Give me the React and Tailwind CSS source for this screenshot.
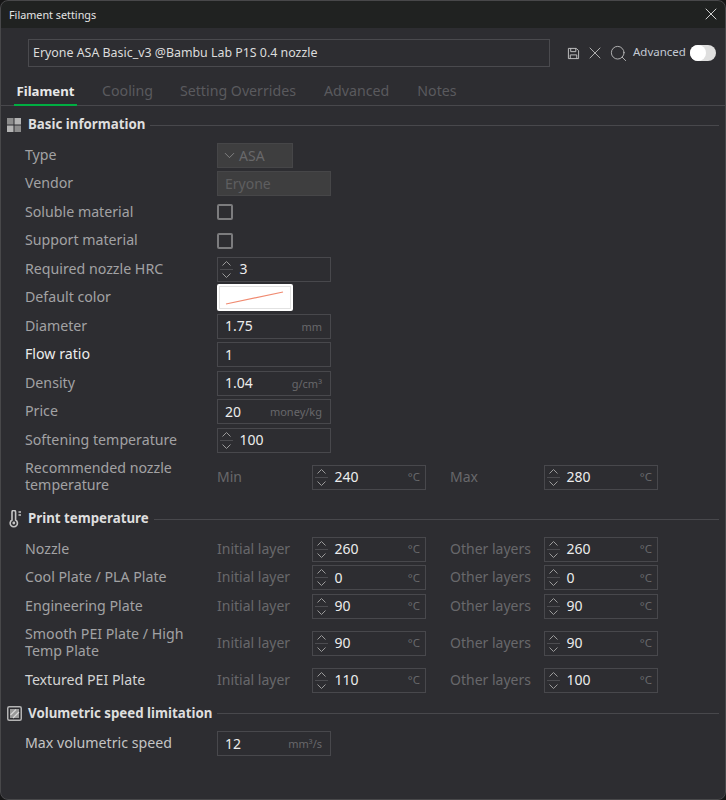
import { ChevronDown, X, Search } from 'lucide-react';

const font = { fontFamily: '"Noto Sans", sans-serif' };

function Spin() {
  return (
    <div className="w-[16px] h-full mr-[5.5px] flex flex-col items-center justify-center shrink-0">
      <svg width="11" height="7" viewBox="0 0 11 7" fill="none" stroke="#9a9a9a" strokeWidth="1">
        <path d="M1.5 5.5 L5.5 1.5 L9.5 5.5" />
      </svg>
      <div className="w-[13px] h-px bg-[#4c4c50] my-[2px]" />
      <svg width="11" height="7" viewBox="0 0 11 7" fill="none" stroke="#9a9a9a" strokeWidth="1">
        <path d="M1.5 1.5 L5.5 5.5 L9.5 1.5" />
      </svg>
    </div>
  );
}

function NumField({ value, unit, spin, temp }) {
  return (
    <div className="w-[114px] h-[25px] border border-[#48484c] flex items-center shrink-0">
      {spin ? <Spin /> : <div className="w-[7px] shrink-0" />}
      <span className="text-[14px] text-[#ececec] flex-1 leading-none">{value}</span>
      {temp && <span className="text-[11.5px] text-[#68686b] pr-[5px] leading-none">°C</span>}
      {unit && <span className="text-[11px] text-[#68686b] pr-[8px] leading-none">{unit}</span>}
    </div>
  );
}

function Row({ label, bright, tall, children }) {
  return (
    <div className={`flex items-center pl-[25px] mb-[3.5px] ${tall ? 'min-h-[42px]' : ''}`}>
      <div className={`w-[192px] shrink-0 text-[14.2px] leading-[17px] pr-2 -mt-[2px] ${bright || 'text-[#a2a2a4]'}`}>{label}</div>
      {children}
    </div>
  );
}

function TempRow({ label, a, b, tall, bright, la = 'Initial layer', lb = 'Other layers' }) {
  return (
    <Row label={label} tall={tall} bright={bright}>
      <div className="w-[95px] shrink-0 text-[14px] text-[#68686b] -mt-[2px]">{la}</div>
      <NumField value={a} temp spin />
      <div className="w-[118px] shrink-0 pl-[24px] text-[14px] text-[#68686b] whitespace-nowrap -mt-[2px]">{lb}</div>
      <NumField value={b} temp spin />
    </Row>
  );
}

function Section({ icon, title, children }) {
  return (
    <>
      <div className="flex items-center h-[35px] pl-[7px] pr-[7px]">
        <div className="w-[21px] shrink-0 -mt-px">{icon}</div>
        <span className="text-[13.3px] font-bold text-[#dedede] whitespace-nowrap">{title}</span>
        <div className="flex-1 h-px bg-[#48484c] ml-[5px]" />
      </div>
      {children}
    </>
  );
}

const GridIcon = (
  <svg width="14" height="14" viewBox="0 0 14 14" fill="#b4b4b4">
    <rect x="0" y="0" width="6.5" height="6.5" fill="#8c8c8c" />
    <rect x="7.5" y="0" width="6.5" height="6.5" />
    <rect x="0" y="7.5" width="6.5" height="6.5" />
    <rect x="7.5" y="7.5" width="6.5" height="6.5" fill="#8c8c8c" />
  </svg>
);

const ThermoIcon = (
  <svg width="14" height="18" viewBox="0 0 14 18" fill="none" stroke="#c4c4c4" strokeWidth="1.6" className="ml-[2px]">
    <path d="M3 2.2a1.8 1.8 0 0 1 3.6 0V10a3.6 3.6 0 1 1-3.6 0Z" />
    <circle cx="4.8" cy="13" r="1.4" fill="#c4c4c4" stroke="none" />
    <path d="M9.5 2h2.5M9.5 5h2.5" />
  </svg>
);

const VolIcon = (
  <svg width="15" height="15" viewBox="0 0 15 15" fill="none">
    <rect x="0.75" y="0.75" width="13.5" height="13.5" rx="1.5" stroke="#b4b4b4" strokeWidth="1.5" />
    <rect x="3" y="3" width="9" height="9" fill="#9a9a9a" />
    <path d="M3.5 9 L9 3.5 M6 12 L12 6" stroke="#d6d6d6" strokeWidth="1.2" />
  </svg>
);

export default function App() {
  return (
    <div style={font} className="w-[726px] h-[800px] bg-[#161616]">
      <div className="relative w-full h-full rounded-lg bg-[#2d2d31] overflow-hidden">
        <div className="h-[28px] bg-[#202221] flex items-center justify-between pl-[9px] pr-[5px]">
          <span className="text-[10.8px] text-[#e4e4e4] mt-[2px]">Filament settings</span>
          <X size={20} strokeWidth={1.1} color="#e0e0e0" />
        </div>

        <div className="flex items-center pl-[28px] pt-[11px] h-[39px]">
          <div className="w-[522px] h-[28px] border border-[#4a4a4e] flex items-center pl-[4px] text-[12.4px] text-[#dcdcdc] shrink-0">
            Eryone ASA Basic_v3 @Bambu Lab P1S 0.4 nozzle
          </div>
          <svg width="13" height="13" viewBox="0 0 14 14" fill="none" stroke="#c8c8c8" strokeWidth="1" className="ml-[17px]">
            <path d="M1.5 1.5H10L12.5 4V12.5H1.5Z" />
            <path d="M4 1.5V5H9.5V1.5M3.5 12.5V8.5H10.5V12.5" />
          </svg>
          <X size={20} strokeWidth={1} color="#c8c8c8" className="ml-[5px]" />
          <Search size={19} strokeWidth={1.05} color="#c8c8c8" className="ml-[4px]" />
          <span className="text-[11.5px] text-[#c4cad4] ml-[5px] -mt-[2px]">Advanced</span>
          <div className="w-[26px] h-[16px] rounded-full bg-[#dedede] ml-[4px] relative">
            <div className="absolute left-0 top-0 w-[16px] h-[16px] rounded-full bg-white" />
          </div>
        </div>

        <div className="flex h-[38.5px] border-b border-[#48484c] pl-[14px] pt-[12px] text-[14.2px] leading-[24px]">
          <div className="w-[63px] h-[26.5px] border-b-2 border-[#00ae42] text-center font-bold text-[13.2px] text-[#e8e8e8]">Filament</div>
          <div className="ml-[25px] text-[#5a5a5e]">Cooling</div>
          <div className="ml-[27px] text-[#5a5a5e]">Setting Overrides</div>
          <div className="ml-[28px] text-[#5a5a5e]">Advanced</div>
          <div className="ml-[28px] text-[#5a5a5e]">Notes</div>
        </div>

        <div className="pt-[2px]">
          <Section icon={GridIcon} title="Basic information">
            <Row label="Type">
              <div className="w-[76px] h-[25px] bg-[#3e3e3f] border border-[#464648] flex items-center pl-[3px] text-[14px] text-[#68686a]">
                <ChevronDown size={17} strokeWidth={1} color="#9a9a9a" className="mr-[1px]" />
                ASA
              </div>
            </Row>
            <Row label="Vendor">
              <div className="w-[114px] h-[25px] bg-[#3e3e3f] border border-[#464648] flex items-center pl-[7px] text-[14px] text-[#5e5e60]">Eryone</div>
            </Row>
            <Row label="Soluble material">
              <div className="h-[25px] flex items-center"><div className="w-[16px] h-[16px] border-2 border-[#7c7c7e] rounded-[2px]" /></div>
            </Row>
            <Row label="Support material">
              <div className="h-[25px] flex items-center"><div className="w-[16px] h-[16px] border-2 border-[#7c7c7e] rounded-[2px]" /></div>
            </Row>
            <Row label="Required nozzle HRC"><NumField value="3" spin /></Row>
            <Row label="Default color">
              <div className="w-[76px] h-[27px] -my-px bg-white rounded-[2px] border-2 border-white shadow-[inset_0_0_0_1px_#e2e2e2] flex items-center justify-center">
                <svg width="60" height="14" viewBox="0 0 60 14" stroke="#f08a70" strokeWidth="1.2">
                  <path d="M1 13 L58 1" />
                </svg>
              </div>
            </Row>
            <Row label="Diameter"><NumField value="1.75" unit="mm" /></Row>
            <Row label="Flow ratio" bright="text-[#ececec]"><NumField value="1" /></Row>
            <Row label="Density"><NumField value="1.04" unit="g/cm³" /></Row>
            <Row label="Price"><NumField value="20" unit="money/kg" /></Row>
            <Row label="Softening temperature"><NumField value="100" spin /></Row>
            <TempRow label="Recommended nozzle temperature" a="240" b="280" la="Min" lb="Max" tall />
          </Section>

          <Section icon={ThermoIcon} title="Print temperature">
            <TempRow label="Nozzle" a="260" b="260" />
            <TempRow label="Cool Plate / PLA Plate" a="0" b="0" />
            <TempRow label="Engineering Plate" a="90" b="90" />
            <TempRow label="Smooth PEI Plate / High Temp Plate" a="90" b="90" tall />
            <TempRow label="Textured PEI Plate" a="110" b="100" bright="text-[#d4d4d4]" />
          </Section>

          <Section icon={VolIcon} title="Volumetric speed limitation">
            <Row label="Max volumetric speed" bright="text-[#c4c4c4]"><NumField value="12" unit="mm³/s" /></Row>
          </Section>
        </div>

        <div className="absolute inset-0 rounded-lg border border-[#48484a] pointer-events-none" />
      </div>
    </div>
  );
}
